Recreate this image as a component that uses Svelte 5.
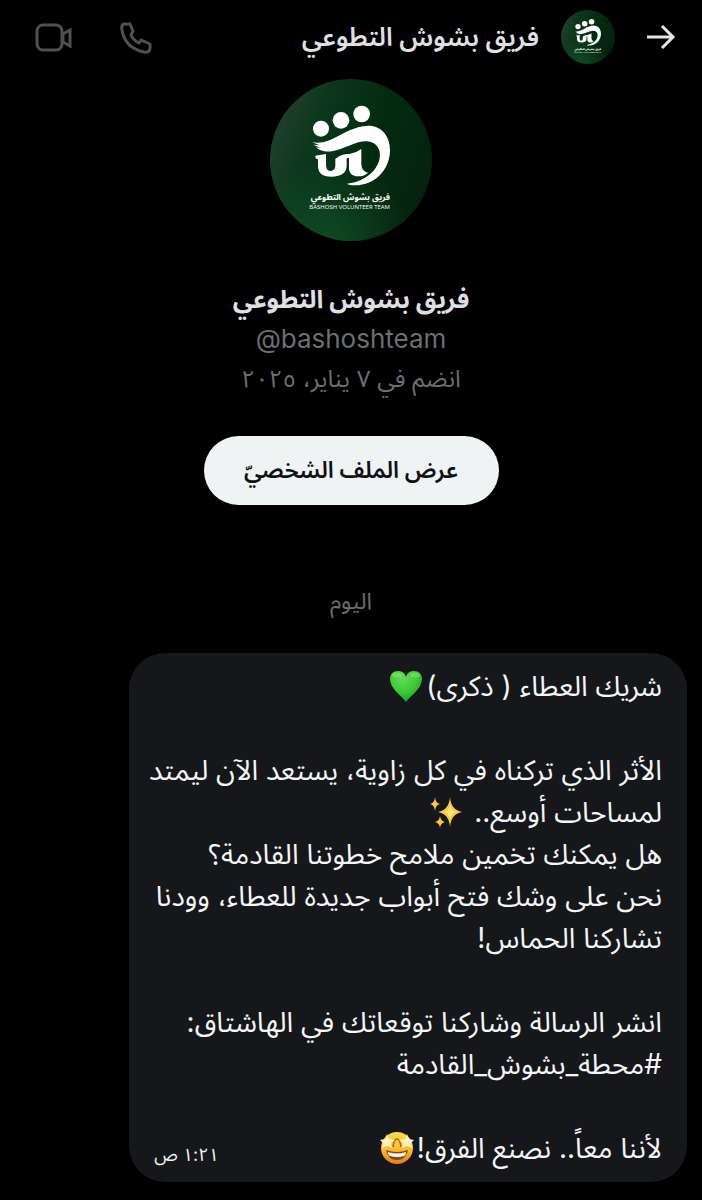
<script>
  const name = 'فريق بشوش التطوعي';
  const lines = [
    [{ text: 'شريك العطاء ( ذكرى)' }, { icon: 'heart' }],
    [],
    [{ text: 'الأثر الذي تركناه في كل زاوية، يستعد الآن ليمتد' }],
    [{ text: 'لمساحات أوسع.. ' }, { icon: 'sparkles' }],
    [{ text: 'هل يمكنك تخمين ملامح خطوتنا القادمة؟' }],
    [{ text: 'نحن على وشك فتح أبواب جديدة للعطاء، وودنا' }],
    [{ text: 'تشاركنا الحماس!' }],
    [],
    [{ text: 'انشر الرسالة وشاركنا توقعاتك في الهاشتاق:' }],
    [{ text: '#محطة_بشوش_القادمة' }],
    []
  ];
  const lastLine = [{ text: 'لأننا معاً.. نصنع الفرق!' }, { icon: 'starstruck' }];
</script>

{#snippet logo(id)}
  <svg class="logo" viewBox="30 27 486 486" role="img" aria-label={name}>
    <defs>
      <linearGradient id={id} x1="0" y1="0.25" x2="1" y2="0.6">
        <stop offset="0" stop-color="#24402d" />
        <stop offset="0.28" stop-color="#0b371c" />
        <stop offset="0.6" stop-color="#032b10" />
        <stop offset="1" stop-color="#06220f" />
      </linearGradient>
      <radialGradient id="{id}-glow" cx="0.38" cy="1" r="0.5">
        <stop offset="0" stop-color="#1b6637" stop-opacity="0.5" />
        <stop offset="1" stop-color="#1b6637" stop-opacity="0" />
      </radialGradient>
    </defs>
    <circle cx="273" cy="270" r="243" fill="url(#{id})" />
    <circle cx="273" cy="270" r="243" fill="url(#{id}-glow)" />
    <g fill="#fff">
      <circle cx="183" cy="176" r="24" />
      <circle cx="243" cy="151" r="25" />
      <circle cx="305" cy="132" r="25" />
      <path d="M157 217C187 222 211 211 241 195C274 177 306 164 337 168C372 174 390 206 390 240C390 298 346 347 282 346C273 346 266 344 261 341C305 337 347 310 358 270C366 239 348 215 320 214C286 213 251 239 216 244C193 247 176 240 168 232L182 234L160 224L179 226Z" />
      <path d="M166 257L198 252V286Q199 304 212 303Q226 302 226 286V266Q240 260 260 259V286Q260 320 214 320Q174 320 174 288V268Q165 266 166 257Z" />
      <path d="M226 268Q240 252 268 252Q288 249 304 237V284Q306 304 324 308Q314 319 294 319Q264 319 267 285V264Z" />
      <text class="mark-ar" x="271" y="389" text-anchor="middle" direction="rtl">{name}</text>
      <text class="mark-en" x="269" y="418" text-anchor="middle">BASHOSH VOLUNTEER TEAM</text>
    </g>
  </svg>
{/snippet}

{#snippet parts(items)}
  {#each items as part}
    {#if part.text}<span>{part.text}</span>
    {:else if part.icon === 'heart'}
      <svg class="emoji" viewBox="0 0 34 34" role="img" aria-label="قلب أخضر">
        <defs>
          <radialGradient id="heart" cx="0.4" cy="0.25" r="0.8">
            <stop offset="0" stop-color="#62dc52" /><stop offset="0.55" stop-color="#3cc936" /><stop offset="1" stop-color="#189d20" />
          </radialGradient>
        </defs>
        <path d="M17 33C13 27 1 20 1 10C1 5 4 2 9 2C13 2 16 4 17 8C18 4 21 2 25 2C30 2 33 5 33 10C33 20 21 27 17 33Z" fill="url(#heart)" />
        <ellipse cx="8" cy="6" rx="5" ry="2.5" fill="#a7f59a" opacity=".35" /><ellipse cx="26" cy="6" rx="5" ry="2.5" fill="#a7f59a" opacity=".35" />
      </svg>
    {:else if part.icon === 'sparkles'}
      <svg class="emoji" viewBox="0 0 34 34" role="img" aria-label="بريق">
        <g fill="#fdc83f">
          <path d="M21 2Q22 15 33 17Q22 19 21 32Q20 19 9 17Q20 15 21 2Z" />
          <path d="M6 2Q6.500 8 11 9Q6.500 10 6 16Q5.500 10 1 9Q5.500 8 6 2Z" />
          <path d="M11 21Q11.500 26 16 27Q11.500 28 11 33Q10.500 28 6 27Q10.500 26 11 21Z" />
        </g>
        <path d="M21 9Q22 16 28 17Q22 18 21 25Q20 18 14 17Q20 16 21 9Z" fill="#ffe37b" />
      </svg>
    {:else}
      <svg class="emoji" viewBox="0 0 34 34" role="img" aria-label="منبهر">
        <defs>
          <linearGradient id="face" x1="0" y1="0" x2="0" y2="1">
            <stop offset="0" stop-color="#ffdc48" /><stop offset="0.6" stop-color="#fdb52c" /><stop offset="1" stop-color="#e07f18" />
          </linearGradient>
        </defs>
        <circle cx="17" cy="17" r="16" fill="url(#face)" />
        <path d="M13 16Q14 8 17 8Q20 8 21 16" fill="none" stroke="#a8661a" stroke-width="1.5" />
        <path d="M6 19Q17 23 28 19Q26 29 17 29Q8 29 6 19Z" fill="#8a4a18" />
        <path d="M8 21Q17 24 26 21Q26 24 24 25Q17 27 10 25Q8 24 8 21Z" fill="#fff" />
        <g fill="#fff0bf">
          <path d="M7 3L9 8L15 9L11 12L12 17L7 15L2 17L3 12L0 9L5 8Z" />
          <path d="M27 3L29 8L34 9L31 12L32 17L27 15L22 17L23 12L19 9L25 8Z" />
        </g>
      </svg>
    {/if}
  {/each}
{/snippet}

<div class="page" dir="rtl" lang="ar">
  <header>
    <button class="icon" aria-label="رجوع">
      <svg width="32" height="32" viewBox="0 0 32 32" fill="none" stroke="#e4e5e6" stroke-width="3"><path d="M2 16H28M17 5L28 16L17 27" /></svg>
    </button>
    <span class="avatar small">{@render logo('green-small')}</span>
    <h1>{name}</h1>
    <button class="icon" aria-label="مكالمة صوتية">
      <svg width="34" height="34" viewBox="0 0 34 34" fill="none" stroke="#505050" stroke-width="3"><path d="M6 4H12L15 11L13 15Q15 20 21 23L23 20L32 24V28Q32 33 26 32Q7 28 4 10Q3 5 6 4Z" stroke-linejoin="round" /></svg>
    </button>
    <button class="icon" aria-label="مكالمة فيديو">
      <svg width="38" height="34" viewBox="0 0 38 34" fill="none" stroke="#505050" stroke-width="3"><rect x="3" y="5" width="25" height="25" rx="6" /><path d="M29 14L36 10V26L29 22Z" /></svg>
    </button>
  </header>

  <section class="profile">
    <span class="avatar">{@render logo('green-large')}</span>
    <h2>{name}</h2>
    <p class="handle" dir="ltr">@bashoshteam</p>
    <p class="joined">انضم في ٧ يناير، ٢٠٢٥</p>
    <button class="view">عرض الملف الشخصيّ</button>
  </section>

  <p class="day">اليوم</p>

  <article class="bubble">
    {#each lines as line}
      <p class="line">{@render parts(line)}</p>
    {/each}
    <footer>
      <p class="line">{@render parts(lastLine)}</p>
      <time datetime="01:21">١:٢١ ص</time>
    </footer>
  </article>
</div>

<style>
  :global(body) { margin: 0; background: #000; }
  .page {
    min-height: 100vh;
    box-sizing: border-box;
    padding: 0 15px 18px;
    background: #000;
    color: #dedfe0;
    font-family: Inter, "Noto Sans Arabic", "DejaVu Sans", sans-serif;
  }
  h1, h2, p { margin: 0; white-space: nowrap; }
  button { border: 0; background: none; padding: 0; font: inherit; cursor: pointer; }
  svg { display: block; flex: none; }
  header { display: flex; align-items: center; height: 74px; padding: 0 10px 0 19px; }
  .icon { display: flex; }
  .avatar { display: block; width: 162px; height: 162px; flex: none; }
  .avatar.small { width: 54px; height: 54px; margin: 0 30px 0 22px; }
  .logo { width: 100%; height: 100%; }
  .mark-ar { font: bold 25px "Noto Sans Arabic", "DejaVu Sans", sans-serif; }
  .mark-en { font: 18px "Open Sans", sans-serif; }
  h1 { flex: 1; font-size: 26px; font-weight: 600; }
  header .icon:last-child { margin-right: 46px; }
  .profile { display: flex; flex-direction: column; align-items: center; padding-top: 5px; }
  h2 { margin-top: 38px; font-size: 25px; line-height: 40px; font-weight: 700; }
  .handle, .joined { color: #6b6e73; line-height: 40px; }
  .handle { font-size: 26px; }
  .joined { font-size: 24px; }
  .view {
    margin-top: 37px; width: 295px; height: 69px; border-radius: 35px;
    background: #eff3f4; color: #0f1115; font-size: 23px; font-weight: 600;
  }
  .day { margin: 76px 0 32px; text-align: center; color: #6b6e73; font-size: 23px; line-height: 40px; }
  .bubble {
    box-sizing: border-box;
    width: 83%;
    padding: 12px 25px 13px;
    border-radius: 36px;
    background: #16171a;
    color: #f4f5f6;
    font-size: 28px;
  }
  .line { display: flex; align-items: center; height: 42px; line-height: 42px; white-space: pre; }
  .emoji { width: 34px; height: 34px; margin-right: 3px; }
  footer { display: flex; justify-content: space-between; align-items: flex-end; }
  time { font-size: 18px; line-height: 28px; }
</style>
